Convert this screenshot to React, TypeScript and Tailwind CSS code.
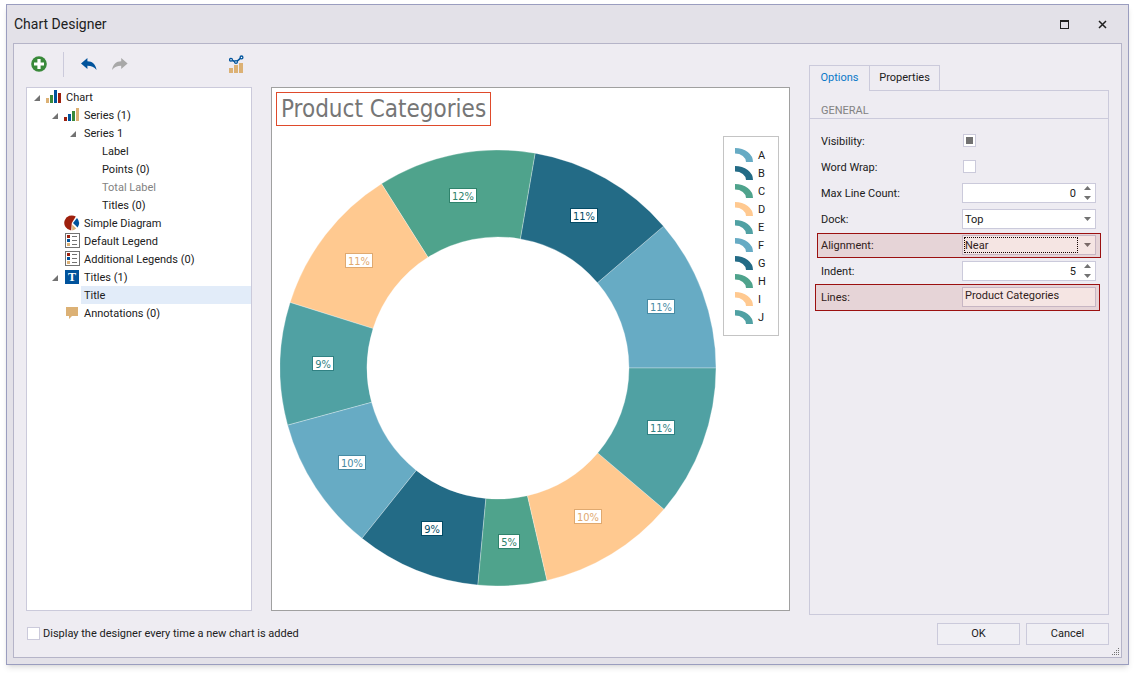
import { useState } from "react";
import type { ReactNode } from "react";

const LIGHT = "#67abc4";
const DARK = "#236b86";
const GREEN = "#4fa38c";
const PEACH = "#ffc990";
const TEAL = "#50a1a3";

type Slice = { name: string; label: string; from: number; to: number; color: string; ink: string };

const slices: Slice[] = [
  { name: "A", label: "11%", from: 0, to: 40.6, color: LIGHT, ink: "#478ba4" },
  { name: "B", label: "11%", from: 40.6, to: 80.2, color: DARK, ink: "#034b66" },
  { name: "C", label: "12%", from: 80.2, to: 122.3, color: GREEN, ink: "#2f836c" },
  { name: "D", label: "11%", from: 122.3, to: 162.5, color: PEACH, ink: "#dfa970" },
  { name: "E", label: "9%", from: 162.5, to: 195.2, color: TEAL, ink: "#308183" },
  { name: "F", label: "10%", from: 195.2, to: 231.4, color: LIGHT, ink: "#478ba4" },
  { name: "G", label: "9%", from: 231.4, to: 264.7, color: DARK, ink: "#034b66" },
  { name: "H", label: "5%", from: 264.7, to: 283, color: GREEN, ink: "#2f836c" },
  { name: "I", label: "10%", from: 283, to: 319.6, color: PEACH, ink: "#dfa970" },
  { name: "J", label: "11%", from: 319.6, to: 360, color: TEAL, ink: "#308183" },
];

const C = 218;
const R_OUT = 218;
const R_IN = 131;

function point(radius: number, degrees: number) {
  const a = (degrees * Math.PI) / 180;
  return { x: C + radius * Math.cos(a), y: C - radius * Math.sin(a) };
}

function slicePath(from: number, to: number) {
  const a = point(R_OUT, from);
  const b = point(R_OUT, to);
  const c = point(R_IN, to);
  const d = point(R_IN, from);
  return `M${a.x} ${a.y}A${R_OUT} ${R_OUT} 0 0 0 ${b.x} ${b.y}L${c.x} ${c.y}A${R_IN} ${R_IN} 0 0 1 ${d.x} ${d.y}Z`;
}

function Doughnut() {
  return (
    <svg viewBox="0 0 436 436" className="h-full w-full" role="img" aria-label="Product Categories">
      {slices.map((s) => (
        <path key={s.name} d={slicePath(s.from, s.to)} fill={s.color} stroke="#fff" strokeOpacity=".5" strokeWidth=".6" />
      ))}
      {slices.map((s) => {
        const p = point((R_OUT + R_IN) / 2, (s.from + s.to) / 2);
        const w = s.label.length === 3 ? 28 : 22;
        const x = Math.floor(p.x - w / 2) + 0.5;
        const y = Math.floor(p.y - 8) + 0.5;
        return (
          <g key={s.name} className="font-['DejaVu_Sans_Condensed','DejaVu_Sans',sans-serif]">
            <rect x={x} y={y} width={w - 1} height="14" fill="#fff" stroke={s.ink} />
            <text x={x + (w - 1) / 2} y={y + 11} fontSize="11" textAnchor="middle" fill={s.ink}>
              {s.label}
            </text>
          </g>
        );
      })}
    </svg>
  );
}

function Bars({ heights, colors }: { heights: number[]; colors: string[] }) {
  return (
    <svg width="16" height="16" viewBox="0 0 16 16" shapeRendering="crispEdges">
      {heights.map((h, i) => (
        <rect key={i} x={1 + i * 4} y={14 - h} width="3" height={h} fill={colors[i]} />
      ))}
    </svg>
  );
}

const chartIcon = <Bars heights={[5, 8, 13, 10]} colors={["#dcb175", "#39893a", "#00539c", "#9e200d"]} />;
const seriesIcon = <Bars heights={[4, 7, 10, 13]} colors={["#9e200d", "#00539c", "#39893a", "#dcb175"]} />;
const pieIcon = (
  <svg width="17" height="16" viewBox="0 0 17 16">
    <path d="M8.800 8 12.800 1.600A7.500 7.500 0 1 0 8.200 15.400Z" fill="#9e200d" />
    <path d="M10 8 14 3a7.600 7.600 0 0 1 .6 9.400Z" fill="#00539c" />
    <path d="M9.200 9.600 13.200 13.600A7.600 7.600 0 0 1 9.200 15.400Z" fill="#dcb175" />
  </svg>
);
const legendIcon = (
  <svg width="18" height="16" viewBox="0 0 18 16" shapeRendering="crispEdges">
    <rect x="2.500" y=".5" width="14" height="14" fill="#fff" stroke="#727272" />
    <rect x="4" y="2" width="3" height="3" fill="#9e200d" />
    <rect x="4" y="6" width="3" height="3" fill="#00539c" />
    <rect x="4" y="10" width="3" height="3" fill="#dcb175" />
    <path d="M9 3.500h5M9 7.500h5M9 11.500h5" stroke="#727272" />
  </svg>
);
const titleIcon = (
  <span className="ml-[2px] flex size-[14px] items-center justify-center bg-[#00539c] font-['Liberation_Serif',serif] text-[12px] leading-none font-bold text-white">
    T
  </span>
);
const noteIcon = (
  <svg width="16" height="16" viewBox="0 0 16 16">
    <path d="M3 2h12v9H9l-3 3v-3H3Z" fill="#dcb175" />
  </svg>
);

type Node = { text: string; indent: string; open?: boolean; icon?: ReactNode; muted?: boolean; selected?: boolean };

const nodes: Node[] = [
  { text: "Chart", indent: "pl-0", open: true, icon: chartIcon },
  { text: "Series (1)", indent: "pl-[18px]", open: true, icon: seriesIcon },
  { text: "Series 1", indent: "pl-[36px]", open: true },
  { text: "Label", indent: "pl-[54px]" },
  { text: "Points (0)", indent: "pl-[54px]" },
  { text: "Total Label", indent: "pl-[54px]", muted: true },
  { text: "Titles (0)", indent: "pl-[54px]" },
  { text: "Simple Diagram", indent: "pl-[18px]", icon: pieIcon },
  { text: "Default Legend", indent: "pl-[18px]", icon: legendIcon },
  { text: "Additional Legends (0)", indent: "pl-[18px]", icon: legendIcon },
  { text: "Titles (1)", indent: "pl-[18px]", open: true, icon: titleIcon },
  { text: "Title", indent: "pl-[36px]", selected: true },
  { text: "Annotations (0)", indent: "pl-[18px]", icon: noteIcon },
];

function Tree() {
  return (
    <ul role="tree" className="mb-1 flex-1 border border-[#cbcadb] bg-white">
      {nodes.map((n) => (
        <li key={n.text} role="treeitem" aria-selected={!!n.selected} className={`flex h-[18px] items-center ${n.indent}`}>
          <span className="flex w-[18px] shrink-0 justify-center">
            {n.open && (
              <svg width="6" height="6" viewBox="0 0 6 6" className="mt-px mr-[-2px]">
                <path d="M6 0v6H0Z" fill="#727272" />
              </svg>
            )}
          </span>
          {n.icon && <span className="flex w-[18px] shrink-0">{n.icon}</span>}
          <span
            className={`flex h-full flex-1 items-center pt-[2px] pl-[3px] whitespace-nowrap ${n.selected ? "bg-[#e2ecf9]" : ""} ${n.muted ? "text-[#828282]" : ""}`}
          >
            {n.text}
          </span>
        </li>
      ))}
    </ul>
  );
}

function Toolbar() {
  return (
    <div className="mb-[3px] flex h-10 items-center pl-1">
      <button aria-label="Add" className="flex size-[18px] items-center justify-center">
        <svg width="16" height="16" viewBox="0 0 16 16">
          <circle cx="8" cy="8" r="7.800" fill="#39893a" />
          <path d="M6.400 3h3.200v3.400H13v3.200H9.600V13H6.400V9.600H3V6.400h3.400Z" fill="#fff" />
        </svg>
      </button>
      <span className="ml-[15px] h-[25px] w-px bg-[#cbcadb]" />
      <button aria-label="Undo" className="ml-[17px]">
        <svg width="16" height="16" viewBox="0 0 16 16">
          <path d="M6.400 2v3.200C11.500 5.200 14.600 8 15.600 14 13 10.800 10.500 9.800 6.400 9.800V13L0 7.600Z" fill="#00539c" />
        </svg>
      </button>
      <button aria-label="Redo" disabled className="ml-[15px]">
        <svg width="16" height="16" viewBox="0 0 16 16">
          <path d="M9.200 2v3.200C4.100 5.200 1 8 0 14 2.600 10.800 5.100 9.800 9.200 9.800V13L15.600 7.600Z" fill="#a8a8a8" />
        </svg>
      </button>
      <button aria-label="Change chart type" className="mr-[7px] ml-auto">
        <svg width="16" height="19" viewBox="0 0 16 19">
          <path d="M0 13h4v5H0zM5 10h4v8H5zM10 8h4v10h-4z" fill="#dcb175" />
          <path d="M1.800 4.800 7 7 12.500 2.400" fill="none" stroke="#00539c" strokeWidth="1.600" />
          <g fill="#fff" stroke="#00539c" strokeWidth="1.300">
            <circle cx="2" cy="4.800" r="1.400" />
            <circle cx="7" cy="7" r="1.400" />
            <circle cx="12.500" cy="2.400" r="1.400" />
          </g>
        </svg>
      </button>
    </div>
  );
}

function ChartPreview() {
  return (
    <section className="mt-[43px] mb-1 flex min-w-0 flex-1 flex-col border border-[#a0a0a0] bg-white">
      <h2 className="mt-1 ml-1 flex h-[34px] items-center self-start border border-[#df4a2b] px-1 font-['DejaVu_Sans_Condensed','DejaVu_Sans',sans-serif] text-[24px] leading-none whitespace-nowrap text-[#767676]">
        Product Categories
      </h2>
      <div className="flex min-h-0 flex-1 pr-[10px] pl-2">
        <div className="flex min-w-0 flex-1 items-center">
          <Doughnut />
        </div>
        <ul className="mt-[10px] ml-[7px] h-[200px] w-14 shrink-0 border border-[#c4c4c4] pt-[9px] pl-[11px]">
          {slices.map((s) => (
            <li key={s.name} className="flex h-[18px] items-center gap-[5px]">
              <svg width="18" height="14" viewBox="0 0 18 14">
                <path d="M0 0A18 14 0 0 1 18 14H11A11 8.500 0 0 0 0 5.500Z" fill={s.color} />
              </svg>
              <span className="pt-[2px]">{s.name}</span>
            </li>
          ))}
        </ul>
      </div>
    </section>
  );
}

function Row({ id, label, mark, children }: { id: string; label: string; mark?: string; children: ReactNode }) {
  return (
    <div className="relative flex h-[26px] items-center">
      <label htmlFor={id} className="flex-1 pt-[2px]">
        {label}
      </label>
      <div className="flex w-[134px]">{children}</div>
      {mark && <span className={`pointer-events-none absolute border border-[#9b1010] bg-[#ab2616]/12 ${mark}`} />}
    </div>
  );
}

const box = "h-5 w-full border border-[#cbcadb] bg-white outline-none";
const check =
  "mb-px flex size-[13px] shrink-0 appearance-none items-center justify-center border border-[#cbcadb] bg-white indeterminate:before:size-[7px] indeterminate:before:bg-[#727272] indeterminate:before:content-[''] checked:before:size-[7px] checked:before:bg-[#727272] checked:before:content-['']";

function Spin({ id, start }: { id: string; start: number }) {
  const [value, setValue] = useState(start);
  return (
    <div className={`flex ${box}`}>
      <input
        id={id}
        inputMode="numeric"
        value={value}
        onChange={(e) => setValue(Number(e.target.value) || 0)}
        className="min-w-0 flex-1 pt-[2px] pr-px text-right outline-none"
      />
      <div className="flex w-[18px] flex-col items-end justify-between py-[2px] pr-1">
        <button aria-label="Increase" onClick={() => setValue(value + 1)}>
          <svg width="7" height="4" viewBox="0 0 7 4" className="block">
            <path d="M0 4h7L3.500 0Z" fill="#727272" />
          </svg>
        </button>
        <button aria-label="Decrease" onClick={() => setValue(Math.max(0, value - 1))}>
          <svg width="7" height="4" viewBox="0 0 7 4" className="block">
            <path d="M0 0h7L3.500 4Z" fill="#727272" />
          </svg>
        </button>
      </div>
    </div>
  );
}

function Choice({ id, options, focused }: { id: string; options: string[]; focused?: boolean }) {
  return (
    <div className="relative w-full">
      <select id={id} className={`block appearance-none pt-[2px] pl-[2px] ${box}`}>
        {options.map((o) => (
          <option key={o}>{o}</option>
        ))}
      </select>
      {focused && (
        <span className="pointer-events-none absolute top-[2px] right-[18px] bottom-[2px] left-[2px] border border-dotted border-black" />
      )}
      <svg width="7" height="4" viewBox="0 0 7 4" className="pointer-events-none absolute top-2 right-[5px]">
        <path d="M0 0h7L3.500 4Z" fill="#727272" />
      </svg>
    </div>
  );
}

function Options() {
  return (
    <aside className="mt-[21px] flex w-[300px] shrink-0 flex-col">
      <div role="tablist" className="relative z-10 -mb-px flex">
        <button role="tab" aria-selected="true" className="h-[26px] w-[61px] border border-b-0 border-[#cbcadb] bg-[#eeecf2] pb-px text-[#0a78c8]">
          Options
        </button>
        <button role="tab" aria-selected="false" className="-ml-px h-[26px] w-[71px] border border-[#cbcadb]">
          Properties
        </button>
      </div>
      <div className="flex-1 border border-[#cbcadb]">
        <h3 className="flex h-7 items-end border-b border-[#cbcadb] pl-[11px] text-[#828282]">GENERAL</h3>
        <div className="mt-[9px] pr-3 pl-[11px]">
          <Row id="visibility" label="Visibility:">
            <input
              id="visibility"
              type="checkbox"
              className={`ml-px ${check}`}
              ref={(el) => {
                if (el) el.indeterminate = true;
              }}
            />
          </Row>
          <Row id="wrap" label="Word Wrap:">
            <input id="wrap" type="checkbox" className={`ml-px ${check}`} />
          </Row>
          <Row id="lineCount" label="Max Line Count:">
            <Spin id="lineCount" start={0} />
          </Row>
          <Row id="dock" label="Dock:">
            <Choice id="dock" options={["Top", "Bottom", "Left", "Right"]} />
          </Row>
          <Row id="alignment" label="Alignment:" mark="top-px bottom-0 -left-1 -right-[5px]">
            <Choice id="alignment" options={["Near", "Center", "Far"]} focused />
          </Row>
          <Row id="indent" label="Indent:">
            <Spin id="indent" start={5} />
          </Row>
          <Row id="lines" label="Lines:" mark="top-0 -bottom-px -left-[6px] -right-1">
            <textarea
              id="lines"
              rows={1}
              defaultValue="Product Categories"
              className={`block resize-none overflow-hidden pt-px pl-[2px] leading-[14px] ${box}`}
            />
          </Row>
        </div>
      </div>
    </aside>
  );
}

const action = "h-[22px] w-[83px] border border-[#cbcadb] bg-[#f0eff4]";

export default function App() {
  return (
    <div className="flex min-h-screen flex-col bg-white px-[6px] pt-1 pb-2 font-[Roboto,sans-serif] text-[11px] leading-[14px] text-[#202020]">
      <main className="flex flex-1 flex-col border border-[#9a9dbf] bg-[#e3e1e8] px-[6px] pb-[6px] shadow-md">
        <header className="flex h-[38px] items-center pr-[15px] pl-px">
          <h1 className="flex-1 text-[14px]">Chart Designer</h1>
          <button aria-label="Maximize" className="mr-7">
            <svg width="11" height="11" viewBox="0 0 11 11" shapeRendering="crispEdges">
              <path d="M1.500 1.500h8v8h-8Z" fill="none" stroke="#202020" />
              <path d="M1 1h9v2H1Z" fill="#202020" />
            </svg>
          </button>
          <button aria-label="Close">
            <svg width="9" height="9" viewBox="0 0 9 9">
              <path d="M1 1l7 7M8 1L1 8" stroke="#202020" strokeWidth="1.500" />
            </svg>
          </button>
        </header>
        <div className="relative flex flex-1 flex-col border border-[#b5b4c8] bg-[#eeecf2] px-3 pb-3">
          <div className="flex flex-1 gap-[19px]">
            <div className="flex w-[226px] shrink-0 flex-col">
              <Toolbar />
              <Tree />
            </div>
            <ChartPreview />
            <Options />
          </div>
          <footer className="mt-2 flex items-center gap-[6px]">
            <label className="flex flex-1 items-center gap-[3px] pl-px">
              <input type="checkbox" className={check} />
              Display the designer every time a new chart is added
            </label>
            <button className={action}>OK</button>
            <button className={action}>Cancel</button>
          </footer>
          <svg width="8" height="8" viewBox="0 0 8 8" shapeRendering="crispEdges" className="absolute right-px bottom-px">
            <path d="M6 0h1v1H6zM4 2h1v1H4zM6 2h1v1H6zM2 4h1v1H2zM4 4h1v1H4zM6 4h1v1H6zM0 6h1v1H0zM2 6h1v1H2zM4 6h1v1H4zM6 6h1v1H6z" fill="#727272" />
          </svg>
        </div>
      </main>
    </div>
  );
}
